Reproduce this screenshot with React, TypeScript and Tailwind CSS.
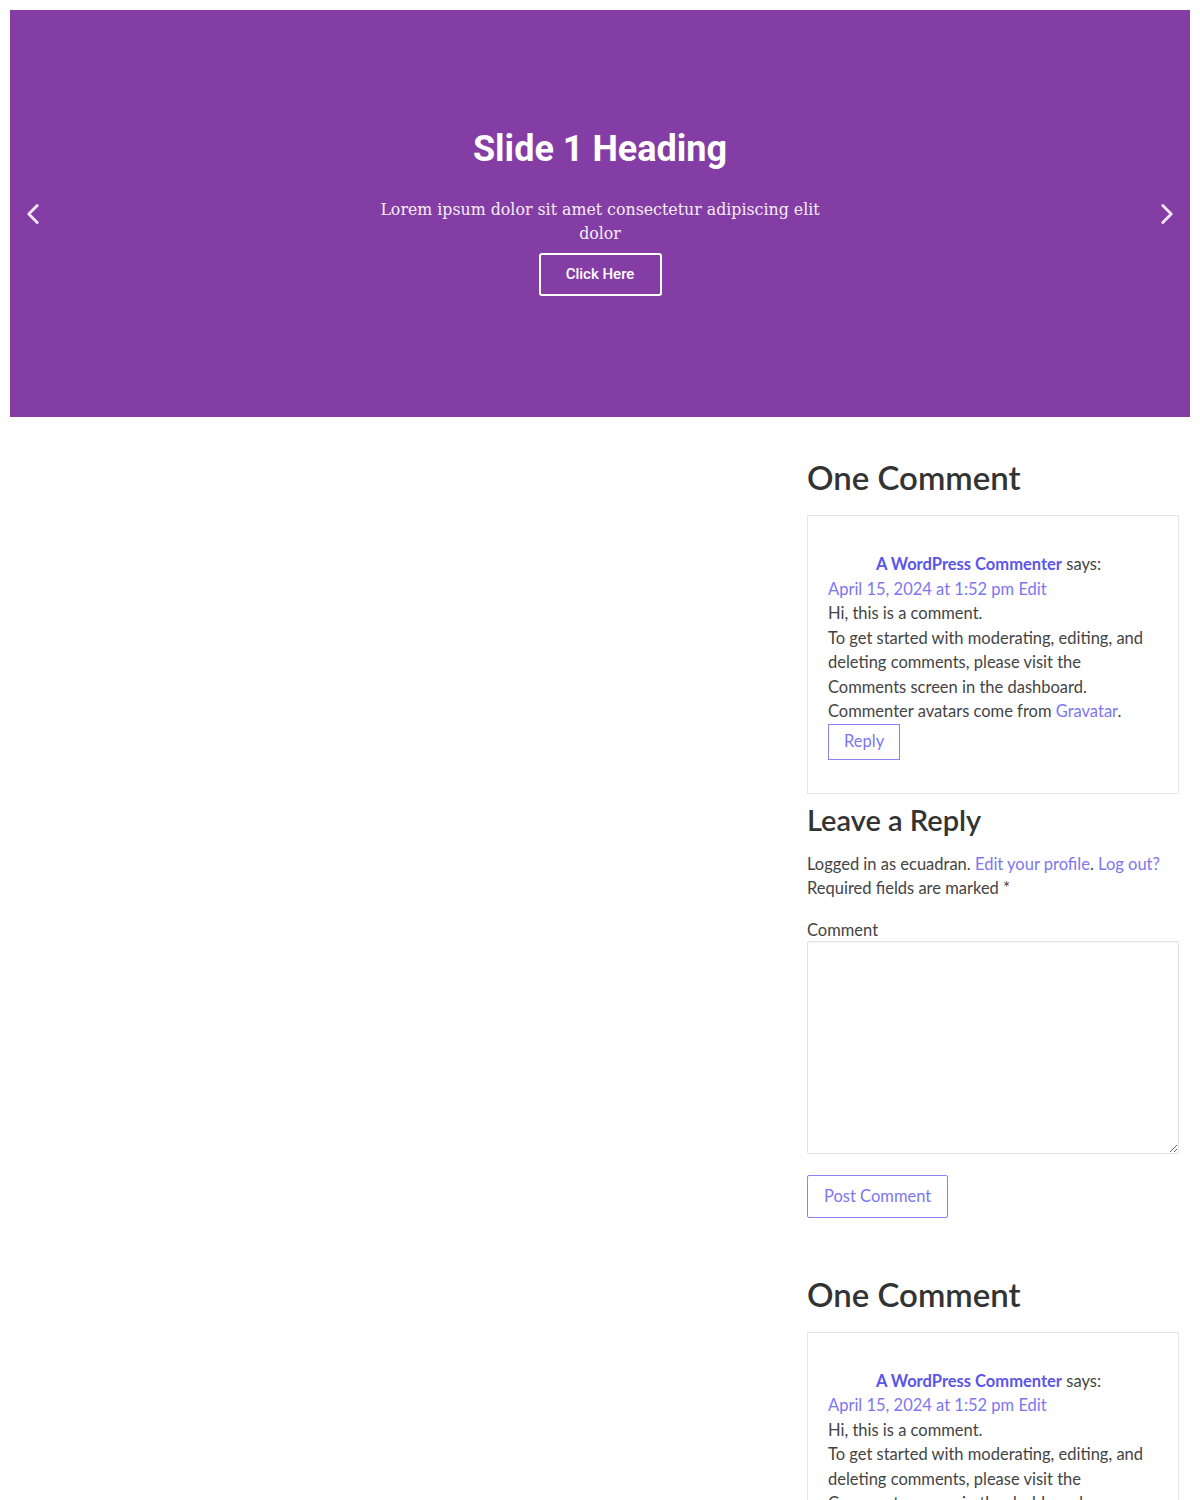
import { ChevronLeft, ChevronRight } from "lucide-react";

const body = "font-['Lato','Noto_Sans',sans-serif]";

function CommentBlock() {
  return (
    <section>
      <h2 className="text-[33px] leading-[40px] font-semibold text-[#333] mt-[40px]">One Comment</h2>
      <div className="mt-[18px] border border-[#e6e6e6] px-[20px] pt-[36px] pb-[33px] text-[16.5px] leading-[24.5px] text-[#444]">
        <div className="pl-[48px]">
          <a className="font-bold text-[#5b55e8]">A WordPress Commenter</a> says:
        </div>
        <div className="text-[#7d76f0]">April 15, 2024 at 1:52 pm Edit</div>
        <p>Hi, this is a comment.</p>
        <p>
          To get started with moderating, editing, and deleting comments, please visit the Comments screen in the
          dashboard.
        </p>
        <p>
          Commenter avatars come from <a className="text-[#7d76f0]">Gravatar</a>.
        </p>
        <button className="border border-[#8a84f2] px-[15px] h-[36px] text-[#7d76f0]">Reply</button>
      </div>
    </section>
  );
}

export default function App() {
  return (
    <div className={`px-[10px] pt-[10px] bg-white min-h-[1500px] ${body}`}>
      {/* slider */}
      <div className="h-[407px] bg-[#843da4] flex items-center justify-between px-[6px] text-white">
        <ChevronLeft size={34} strokeWidth={2} className="text-[#f0e6f5]" />
        <div className="flex flex-col items-center mb-[4px]">
          <h1 className="font-['Roboto',sans-serif] font-bold text-[36px] leading-[44px]">Slide 1 Heading</h1>
          <p className="mt-[27px] w-[460px] text-center font-['DejaVu_Serif',serif] text-[15.8px] leading-[24px] text-[#f5eef8]">
            Lorem ipsum dolor sit amet consectetur adipiscing elit dolor
          </p>
          <button className="mt-[7px] w-[123px] h-[43px] border-2 border-white rounded-[3px] font-['Roboto',sans-serif] font-medium text-[15px]">
            Click Here
          </button>
        </div>
        <ChevronRight size={34} strokeWidth={2} className="text-[#f0e6f5]" />
      </div>

      <div className="flex justify-end pr-[11px]">
        <aside className="w-[372px] text-[#444]">
          <CommentBlock />

          <h2 className="text-[29px] leading-[36px] font-semibold text-[#333] mt-[8px]">Leave a Reply</h2>
          <p className="mt-[14px] text-[16.5px] leading-[24.5px]">
            Logged in as ecuadran. <a className="text-[#7d76f0]">Edit your profile</a>.{" "}
            <a className="text-[#7d76f0]">Log out?</a>
            <br />
            Required fields are marked *
          </p>
          <label className="block mt-[19px] text-[16.5px] leading-[21px]">Comment</label>
          <textarea className="block w-full h-[213px] border border-[#e2e2e2] rounded-[2px] shadow-[inset_0_1px_2px_rgba(0,0,0,0.04)]" />
          <button className="mt-[21px] h-[43px] px-[16px] border border-[#8a84f2] rounded-[2px] text-[16.5px] text-[#7d76f0]">
            Post Comment
          </button>

          <div className="mt-[56px]">
            <CommentBlock />
          </div>
        </aside>
      </div>
    </div>
  );
}
